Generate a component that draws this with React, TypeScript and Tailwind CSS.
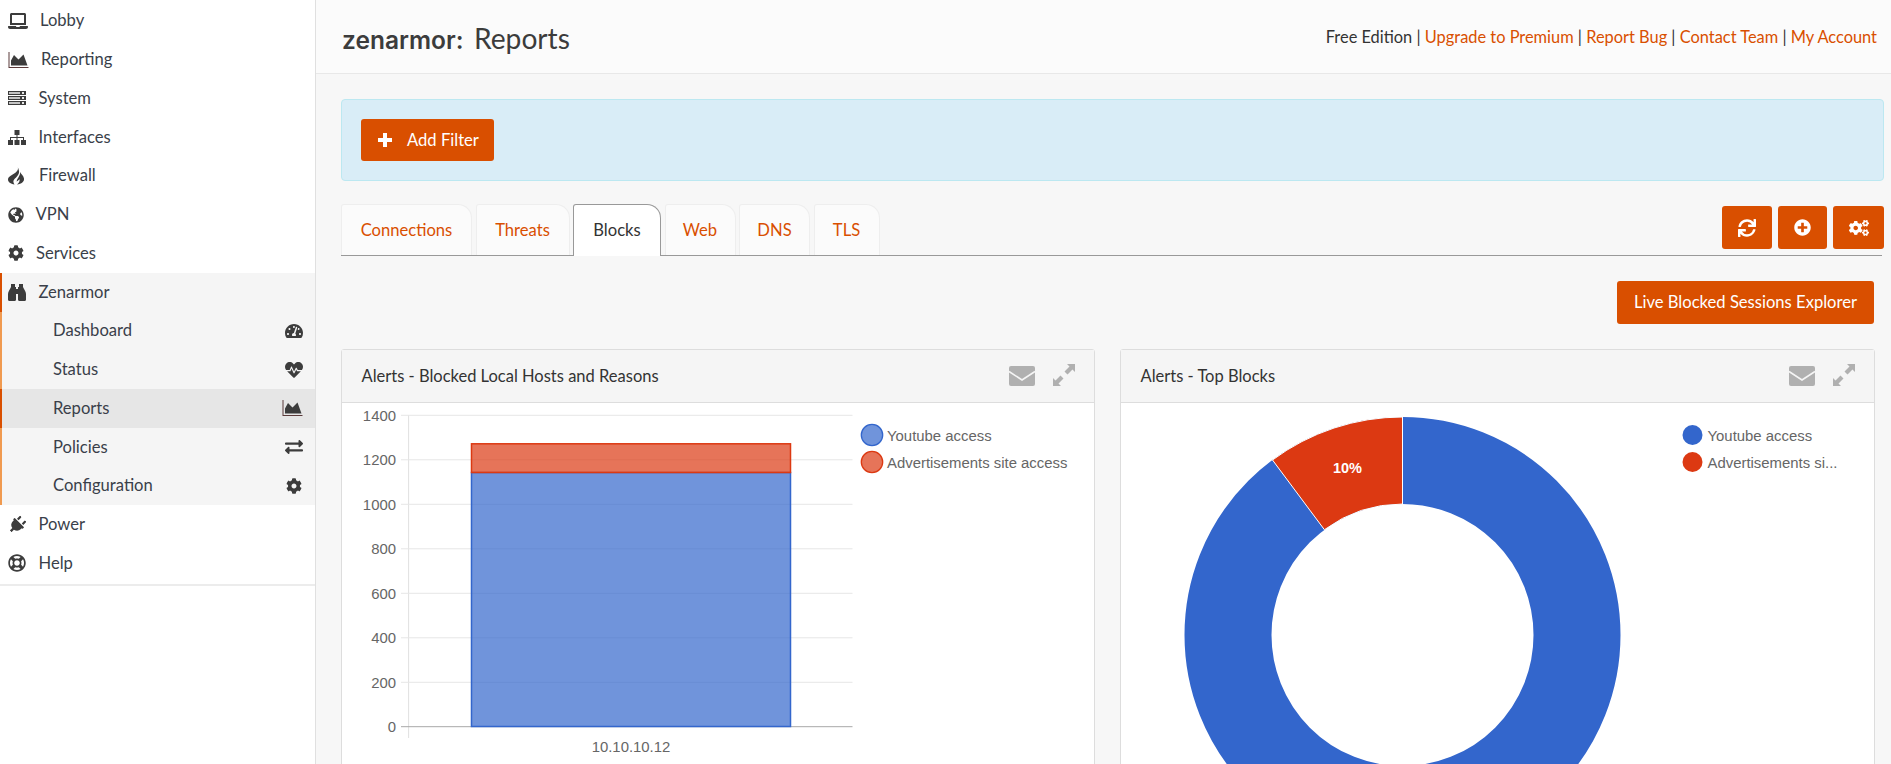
import React from 'react';
import {
  FaLaptop, FaGlobeAmericas, FaCog, FaPlug, FaRegLifeRing, FaTachometerAlt, FaHeartbeat,
  FaExchangeAlt, FaSync, FaPlusCircle, FaCogs,
} from 'react-icons/fa';

// font-awesome 4 shapes that the packaged icon sets no longer have
const AreaIcon = () => (
  <svg viewBox="0 0 20 16" width="21" height="16" fill="#3c3c3c">
    <path d="M0 0h1v15h19v1H0z" fill="#5a3a3a" />
    <path d="M2.5 13.5V8.5L5.5 3L10 7.5L15 2.5L19 13.5z" />
  </svg>
);

const ServerIcon = () => (
  <svg viewBox="0 0 18 14" width="18" height="14">
    {[0, 5, 10].map(y => (
      <g key={y}>
        <rect x="0" y={y} width="18" height="4" fill="#3c3c3c" />
        <rect x="1" y={y + 1} width="11" height="2" fill="#c4c4c4" />
        <rect x="14" y={y + 1} width="2" height="2" fill="#e8e8e8" />
      </g>
    ))}
  </svg>
);

const SitemapIcon = () => (
  <svg viewBox="0 0 18 15" width="18" height="15" fill="#3c3c3c">
    <rect x="6.5" y="0" width="5" height="5" />
    <rect x="8.5" y="5" width="1" height="5" />
    <path d="M2 10V7h14v3h-1V8H3v2z" />
    <rect x="0" y="10" width="5" height="5" />
    <rect x="6.5" y="10" width="5" height="5" />
    <rect x="13" y="10" width="5" height="5" />
  </svg>
);

const FlameIcon = () => (
  <svg viewBox="0 0 17 18" width="17" height="19" fill="#3c3c3c">
    <path d="M9.5 0C11 3 9 5 7 6.5C4 8.5 0 10 0 13C0 15.5 2.5 17.5 6.5 18C5 16 5 14 6.5 12.5C8.5 10.5 11.5 8 11 4.5C10.8 3 10.2 1.3 9.5 0Z" />
    <path d="M12.5 5.5C13 8 15.5 9 16 12C16.5 15 13.5 17.5 9 18C11 16.5 12 14.5 11.5 12.5C11 13.5 10 14.2 8.5 15C9 12 12 9.5 12.5 5.5Z" />
  </svg>
);

const BinocularsIcon = () => (
  <svg viewBox="0 0 18 17" width="18" height="17" fill="#3c3c3c">
    <path d="M3 0H7V3H8V15.5C8 16.3 7.5 17 6.5 17H1.5C0.5 17 0 16.3 0 15.5V10C0 8 2 5 3 3Z" />
    <path d="M15 0H11V3H10V15.5C10 16.3 10.5 17 11.5 17H16.5C17.5 17 18 16.3 18 15.5V10C18 8 16 5 15 3Z" />
    <rect x="8" y="5" width="2" height="5" />
  </svg>
);

const PlusIcon = () => (
  <svg viewBox="0 0 14 14" width="14" height="14" fill="#ffffff">
    <path d="M5 0h4v5h5v4H9v5H5V9H0V5h5z" />
  </svg>
);

const MailIcon = () => (
  <svg viewBox="0 0 26 20" width="26" height="20">
    <rect width="26" height="20" rx="2" fill="#b0b0b0" />
    <path d="M0 5.5L13 14L26 5.5" fill="none" stroke="#f5f5f5" strokeWidth="1.6" />
  </svg>
);

const ExpandIcon = () => (
  <svg viewBox="0 0 22 22" width="22" height="22" fill="#b0b0b0">
    <path d="M14 0H22V8L19.5 5.5L14.5 10.5L11.5 7.5L16.5 2.5Z" />
    <path d="M8 22H0V14L2.5 16.5L7.5 11.5L10.5 14.5L5.5 19.5Z" />
  </svg>
);

const topNav = [
  { label: 'Lobby', icon: <FaLaptop size={20} className="text-[#3c3c3c]" />, width: 'w-[32px]' },
  { label: 'Reporting', icon: <AreaIcon />, width: 'w-[33px]' },
  { label: 'System', icon: <ServerIcon />, width: 'w-[30.5px]' },
  { label: 'Interfaces', icon: <SitemapIcon />, width: 'w-[30.5px]' },
  { label: 'Firewall', icon: <FlameIcon />, width: 'w-[31px]' },
  { label: 'VPN', icon: <FaGlobeAmericas size={16} className="text-[#3c3c3c]" />, width: 'w-[27.5px]' },
  { label: 'Services', icon: <FaCog size={16} className="text-[#3c3c3c]" />, width: 'w-[28px]' },
];

const subNav = [
  { label: 'Dashboard', icon: <FaTachometerAlt size={18} className="text-[#3c3c3c]" /> },
  { label: 'Status', icon: <FaHeartbeat size={18} className="text-[#3c3c3c]" /> },
  { label: 'Reports', icon: <AreaIcon />, active: true },
  { label: 'Policies', icon: <FaExchangeAlt size={18} className="text-[#3c3c3c]" /> },
  { label: 'Configuration', icon: <FaCog size={16} className="text-[#3c3c3c] mr-px" /> },
];

const tabs = [
  { label: 'Connections', width: 'w-[131px]' },
  { label: 'Threats', width: 'w-[94px]' },
  { label: 'Blocks', width: 'w-[88px]', active: true },
  { label: 'Web', width: 'w-[71px]' },
  { label: 'DNS', width: 'w-[71px]' },
  { label: 'TLS', width: 'w-[66px]' },
];

const gridLines = [
  { y: 415.3, label: '1400' },
  { y: 459.8, label: '1200' },
  { y: 504.3, label: '1000' },
  { y: 548.8, label: '800' },
  { y: 593.3, label: '600' },
  { y: 637.8, label: '400' },
  { y: 682.3, label: '200' },
  { y: 726.7, label: '0' },
];

const Sidebar = () => (
  <aside className="w-[316px] shrink-0 bg-white border-r border-[#e0e0e0] text-[16.6px] text-[#3a3f4a]">
    <nav className="border-b-2 border-[#ececec] pt-[1.5px] pb-px">
      {topNav.map(item => (
        <div key={item.label} className="h-[38.75px] pl-2 flex items-center">
          <span className={`${item.width} shrink-0`}>{item.icon}</span>
          {item.label}
        </div>
      ))}
      <div className="h-[38.75px] pl-1.5 flex items-center bg-[#f5f5f5] border-l-2 border-[#d94f00]">
        <span className="w-[30.5px] shrink-0"><BinocularsIcon /></span>
        Zenarmor
      </div>
      {subNav.map(item => (
        <div
          key={item.label}
          className={`h-[38.75px] pl-[51px] pr-3 flex items-center justify-between border-l-2 ${item.active ? 'bg-[#e6e6e6] border-[#d94f00]' : 'bg-[#f5f5f5] border-[#f09a50]'}`}
        >
          {item.label}
          {item.icon}
        </div>
      ))}
      <div className="h-[38.75px] pl-2 flex items-center">
        <span className="w-[30.5px] shrink-0"><FaPlug size={18} className="text-[#3c3c3c] rotate-45" /></span>
        Power
      </div>
      <div className="h-[38.75px] pl-2 flex items-center">
        <span className="w-[30.5px] shrink-0"><FaRegLifeRing size={18} className="text-[#3c3c3c]" /></span>
        Help
      </div>
    </nav>
  </aside>
);

const CardHeader = ({ title }: { title: string }) => (
  <div className="h-[53px] shrink-0 bg-[#f5f5f5] border-b border-[#dddddd] pl-[19.5px] pr-[19px] flex items-center justify-between">
    <span className="text-[16.5px] text-[#333333]">{title}</span>
    <div className="flex items-center gap-[18.5px]">
      <MailIcon />
      <span className="-mt-0.5"><ExpandIcon /></span>
    </div>
  </div>
);

const BarChart = () => (
  <svg viewBox="342 403 751 361" className="w-[751px] h-[361px] block" fontFamily="'Liberation Sans', sans-serif">
    <line x1="408.6" y1="415" x2="408.6" y2="738" stroke="#e0e0e0" />
    {gridLines.map(g => (
      <g key={g.label}>
        <line x1="401" y1={g.y} x2="852.5" y2={g.y} stroke={g.label === '0' ? '#a8a8a8' : '#e6e6e6'} />
        <text x="396" y={g.y + 5.5} textAnchor="end" fontSize="14.9" fill="#666666">{g.label}</text>
      </g>
    ))}
    <rect x="471.5" y="472.5" width="319" height="254" fill="#3366cc" fillOpacity="0.7" stroke="#3366cc" strokeWidth="1.5" />
    <rect x="471.5" y="443.8" width="319" height="28.7" fill="#dc3912" fillOpacity="0.7" stroke="#dc3912" strokeWidth="1.5" />
    <text x="631" y="752" textAnchor="middle" fontSize="14.9" fill="#666666">10.10.10.12</text>
    <circle cx="872" cy="435" r="10.7" fill="#3366cc" fillOpacity="0.7" stroke="#3366cc" strokeWidth="1.3" />
    <text x="887" y="441" fontSize="14.9" fill="#666666">Youtube access</text>
    <circle cx="872" cy="462" r="10.7" fill="#dc3912" fillOpacity="0.7" stroke="#dc3912" strokeWidth="1.3" />
    <text x="887" y="468" fontSize="14.9" fill="#666666">Advertisements site access</text>
  </svg>
);

const DonutChart = () => (
  <svg viewBox="1122 403 753 361" className="w-[753px] h-[361px] block" fontFamily="'Liberation Sans', sans-serif">
    <circle cx="1403.5" cy="635" r="174.5" fill="none" stroke="#3366cc" strokeWidth="87" />
    <path d="M1403.5 417 A218 218 0 0 0 1273.5 460 L1325.4 529.7 A131 131 0 0 1 1403.5 504 Z" fill="#dc3912" stroke="#ffffff" strokeWidth="1" />
    <text x="1348.5" y="473" textAnchor="middle" fontSize="14.5" fontWeight="bold" fill="#ffffff">10%</text>
    <circle cx="1693.5" cy="435" r="10" fill="#3366cc" />
    <text x="1708.5" y="441" fontSize="14.9" fill="#666666">Youtube access</text>
    <circle cx="1693.5" cy="462" r="10" fill="#dc3912" />
    <text x="1708.5" y="468" fontSize="14.9" fill="#666666">Advertisements si...</text>
  </svg>
);

export default function App() {
  return (
    <div className="w-[1891px] h-[764px] overflow-hidden flex bg-[#f7f7f7] font-['Lato',sans-serif] text-[#333333]">
      <Sidebar />
      <main className="flex-1 min-w-0 flex flex-col">
        <header className="h-[74px] shrink-0 bg-[#fbfbfb] border-b border-[#e8e8e8] pl-[26px] pr-[14px] flex items-center justify-between">
          <h1 className="mt-1 flex items-baseline gap-[10.5px] text-[#3c3c3c] leading-none">
            <span className="font-['Inter',sans-serif] font-semibold text-[24.5px]">zenarmor:</span>
            <span className="text-[28.2px]">Reports</span>
          </h1>
          <div className="mt-0.5 text-[16.4px] whitespace-nowrap">
            Free Edition <span>|</span>{' '}
            <a className="text-[#d94f00]">Upgrade to Premium</a> |{' '}
            <a className="text-[#d94f00]">Report Bug</a> |{' '}
            <a className="text-[#d94f00]">Contact Team</a> |{' '}
            <a className="text-[#d94f00]">My Account</a>
          </div>
        </header>

        <div className="pl-[25px] pr-[7px] flex flex-col">
          <div className="mt-[25px] h-[82px] bg-[#d9edf7] border border-[#bce8f1] rounded-[4px] pl-[19px] flex items-center">
            <button className="w-[133px] h-[42px] bg-[#d94f00] rounded-[3px] text-white text-[16.6px] flex items-center pl-[17px] gap-[15px]">
              <PlusIcon />
              Add Filter
            </button>
          </div>

          <div className="mt-[23px] h-[52px] border-b border-[#999999] mr-[2px] flex justify-between">
            <div className="flex gap-[3.5px]">
              {tabs.map(tab => (
                <div
                  key={tab.label}
                  className={`${tab.width} rounded-tl-[3px] rounded-tr-[14px] flex items-center justify-center text-[16.6px] ${tab.active ? 'h-[52px] bg-white border border-b-0 border-[#999999] text-[#333333] relative z-10' : 'h-[51px] bg-[#fbfbfb] border border-b-0 border-[#eeeeee] text-[#d94f00]'}`}
                >
                  {tab.label}
                </div>
              ))}
            </div>
            <div className="flex gap-[6px] h-[43px] mt-[2px] -mr-[2px] text-white">
              <button className="w-[50px] h-[43px] bg-[#d94f00] rounded-[3px] flex items-center justify-center"><FaSync size={18} /></button>
              <button className="w-[49px] h-[43px] bg-[#d94f00] rounded-[3px] flex items-center justify-center"><FaPlusCircle size={17} /></button>
              <button className="w-[51px] h-[43px] bg-[#d94f00] rounded-[3px] flex items-center justify-center"><FaCogs size={20} /></button>
            </div>
          </div>

          <div className="mt-[25px] flex justify-end pr-[10px]">
            <button className="w-[257px] h-[43px] bg-[#d94f00] rounded-[3px] text-white text-[16.6px]">Live Blocked Sessions Explorer</button>
          </div>

          <div className="mt-[25px] flex gap-[25px] h-[500px]">
            <section className="w-[754px] bg-white border border-[#dddddd] rounded-t-[3px] flex flex-col">
              <CardHeader title="Alerts - Blocked Local Hosts and Reasons" />
              <BarChart />
            </section>
            <section className="w-[755px] bg-white border border-[#dddddd] rounded-t-[3px] flex flex-col">
              <CardHeader title="Alerts - Top Blocks" />
              <DonutChart />
            </section>
          </div>
        </div>
      </main>
    </div>
  );
}
